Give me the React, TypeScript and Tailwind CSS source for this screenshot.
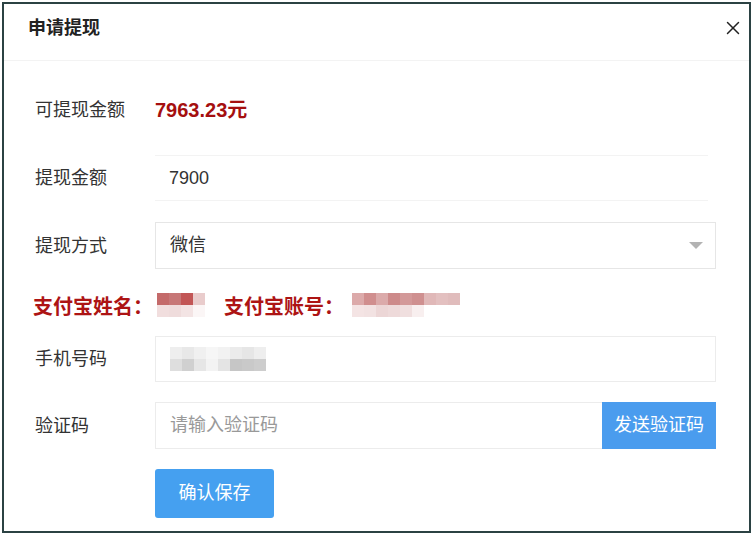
import { X } from 'lucide-react';

const FONT = { fontFamily: '"Liberation Sans", "Noto Sans CJK SC", sans-serif' };

const NAME_MOSAIC = [
  ['#c46a6a', '#c77777', '#c25656', '#e9cccc'],
  ['#f1dede', '#efdcdc', '#f3e4e4', '#fbf6f6'],
];

const ACCOUNT_MOSAIC = [
  ['#dcaaaa', '#d08e8e', '#dbaaaa', '#cd8a8a', '#d39999', '#cf9090', '#e0b8b8', '#e3c0c0', '#e0bcbc'],
  ['#f4e4e4', '#f2e2e2', '#ecd6d6', '#eedada', '#f0dfdf', '#f8efef', '#ffffff', '#ffffff', '#ffffff'],
];

const PHONE_MOSAIC = [
  ['#eeeeee', '#e8e8e8', '#f0f0f0', '#f6f6f6', '#f2f2f2', '#ebebeb', '#e6e6e6', '#eeeeee'],
  ['#dedede', '#d0d0d0', '#e6e6e6', '#f3f3f3', '#e4e4e4', '#c6c6c6', '#c9c9c9', '#cdcdcd'],
];

function Mosaic({ rows }: { rows: string[][] }) {
  return (
    <div className="flex flex-col">
      {rows.map((row, i) => (
        <div key={i} className="flex">
          {row.map((c, j) => (
            <div key={j} className="w-[12px] h-[12px]" style={{ backgroundColor: c }} />
          ))}
        </div>
      ))}
    </div>
  );
}

function Label({ children }: { children: string }) {
  return <div className="w-[120px] shrink-0 text-[18px] leading-[24px] text-[#333]">{children}</div>;
}

export default function App() {
  return (
    <div className="w-[754px] h-[536px] bg-white" style={FONT}>
      <div className="ml-[2px] mt-[2px] w-[749px] h-[531px] border-2 border-[#2b4243] flex flex-col">
        <div className="h-[57px] shrink-0 flex items-start justify-between pt-[12px] pl-[24px] pr-[5px] border-b border-[#f3f3f3]">
          <span className="text-[18px] leading-[24px] font-bold text-[#222]">申请提现</span>
          <X className="w-[22px] h-[22px] text-[#222] mt-[1px]" strokeWidth={1.6} />
        </div>

        <div className="flex flex-col pl-[31px] pr-[33px]">
          <div className="mt-[26px] h-[46px] flex items-center">
            <Label>可提现金额</Label>
            <span className="text-[20px] leading-[24px] font-bold text-[#a50f0f]">7963.23元</span>
          </div>

          <div className="mt-[22px] h-[46px] flex items-center">
            <Label>提现金额</Label>
            <div className="flex-1 h-full flex items-center border-y border-[#f3f3f3] pl-[14px] mr-[8px] text-[18px] text-[#333]">
              7900
            </div>
          </div>

          <div className="mt-[21px] h-[47px] flex items-center">
            <Label>提现方式</Label>
            <div className="flex-1 h-full flex items-center justify-between border border-[#e6e6e6] pl-[14px] pr-[12px] text-[18px] text-[#333]">
              <span>微信</span>
              <svg width="14" height="8" viewBox="0 0 14 8">
                <path d="M0 0 L14 0 L7 7 Z" fill="#b3b3b3" />
              </svg>
            </div>
          </div>

          <div className="mt-[11px] h-[46px] flex items-center -ml-[2px] text-[20px] leading-[24px] font-bold text-[#ad1414]">
            <span className="mt-[8px]">支付宝姓名：</span>
            <div className="ml-[4px] mt-[4px]">
              <Mosaic rows={NAME_MOSAIC} />
            </div>
            <span className="ml-[19px] mt-[8px]">支付宝账号：</span>
            <div className="ml-[8px] mt-[4px]">
              <Mosaic rows={ACCOUNT_MOSAIC} />
            </div>
          </div>

          <div className="mt-[10px] h-[46px] flex items-center">
            <Label>手机号码</Label>
            <div className="flex-1 h-full flex items-center border border-[#ececec] pl-[14px]">
              <Mosaic rows={PHONE_MOSAIC} />
            </div>
          </div>

          <div className="mt-[20px] h-[47px] flex items-center">
            <Label>验证码</Label>
            <div className="flex-1 h-full flex">
              <div className="flex-1 flex items-center border border-r-0 border-[#ececec] pl-[14px] text-[18px] text-[#999]">
                请输入验证码
              </div>
              <button className="w-[114px] h-full bg-[#4a9cee] text-white text-[18px]">发送验证码</button>
            </div>
          </div>

          <div className="mt-[20px] flex">
            <div className="w-[120px] shrink-0" />
            <button className="w-[119px] h-[49px] rounded-[3px] bg-[#45a0f0] text-white text-[18px]">确认保存</button>
          </div>
        </div>
      </div>
    </div>
  );
}
